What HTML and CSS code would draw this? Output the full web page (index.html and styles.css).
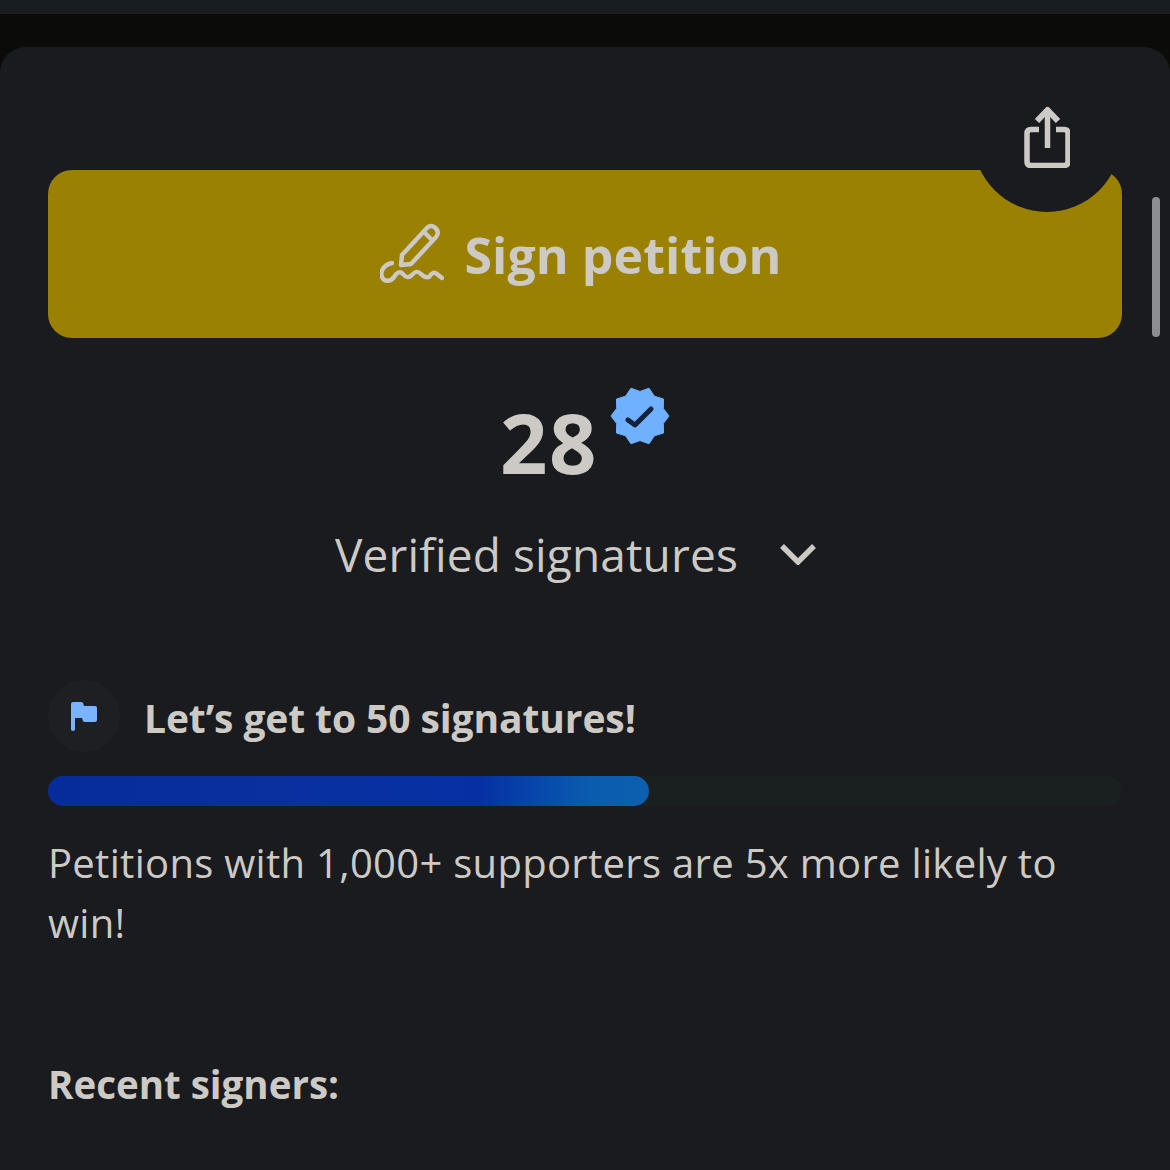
FILE: index.html
```html
<!DOCTYPE html>
<html lang="en">
<head>
    <meta charset="UTF-8">
    <title>Sign petition</title>
    <link rel="stylesheet" href="styles.css">
</head>
<body>
    <div class="top-strip"></div>
    <div class="sheet">
        <div class="sign-wrap">
            <button class="sign-btn">
                <svg class="pen-icon" viewBox="0 0 64 64" fill="none" stroke="currentColor" stroke-width="4.400" stroke-linecap="round" stroke-linejoin="round">
                    <path d="M21 43 L22 33 L46 7 Q50 2 55 5.500 Q60 10 56 15 L31 42 Z"/>
                    <path d="M44 10 L52 18"/>
                    <path d="M12 41 C3 43 0 50 2 55 C4 60 11 60 14 55 C17 50 20 49 23 52 C26 56 29 56 32 53 C35 49 38 49 41 52 C44 55 46 56 49 55 C52 50 55 50 57 52 L62 56"/>
                </svg>
                <span>Sign petition</span>
            </button>
            <div class="share-notch">
                <svg class="share-icon" viewBox="0 0 46 62" fill="none" stroke="currentColor" stroke-width="5.500" stroke-linejoin="round">
                    <path d="M15 23.500 H7 Q3 23.500 3 27.500 V55.500 Q3 59.500 7 59.500 H40 Q44 59.500 44 55.500 V27.500 Q44 23.500 40 23.500 H32"/>
                    <path d="M23.500 42 V3"/>
                    <path d="M13 15 L23.500 4 L34 15" stroke-width="6"/>
                </svg>
            </div>
        </div>

        <div class="count-row">
            <span class="count">28</span>
            <svg class="badge" viewBox="-30 -30 60 60">
                <polygon fill="#6fb1ff" stroke="#6fb1ff" stroke-width="1" stroke-linejoin="round" points="29,0 23.300,7.600 23.500,17 14.400,19.800 9,27.800 0,24.500 -9,27.800 -14.400,19.800 -23.500,17 -23.300,7.600 -29,0 -23.300,-7.600 -23.500,-17 -14.400,-19.800 -9,-27.800 0,-24.500 9,-27.800 14.400,-19.800 23.500,-17 23.300,-7.600"/>
                <path d="M-12 4 L-5 9 L11 -7" fill="none" stroke="#14233b" stroke-width="5" stroke-linecap="round" stroke-linejoin="round"/>
            </svg>
        </div>

        <div class="verified-row">
            <span>Verified signatures</span>
            <svg class="chevron" viewBox="0 0 36 22" fill="none" stroke="currentColor" stroke-width="5.500">
                <path d="M2 3 L18 19 L34 3"/>
            </svg>
        </div>

        <div class="goal-row">
            <div class="flag-circle">
                <svg class="flag" viewBox="0 0 28 30">
                    <path d="M1 3 Q1 1 3 1 H11 Q12.500 1 13 2 L14 5 H25 Q27 5 27 7 V19 Q27 21 25 21 H15 Q13.500 21 13 20 L12 17 H5 V28 Q5 30 3 30 Q1 30 1 28 Z" fill="#78b4ff"/>
                </svg>
            </div>
            <div class="goal-text">Let’s get to 50 signatures!</div>
        </div>

        <div class="progress-track">
            <div class="progress-fill" style="width: 56%"></div>
        </div>

        <p class="blurb">Petitions with 1,000+ supporters are 5x more likely to win!</p>

        <h3 class="recent">Recent signers:</h3>
    </div>
    <div class="scroll-thumb"></div>
</body>
</html>
```

FILE: styles.css
```css
html, body {
    height: 100%;
}

body {
    margin: 0;
    padding: 0;
    overflow: hidden;
    position: relative;
    font-family: "Open Sans", "Noto Sans", sans-serif;
    background-color: #0b0b09;
    color: #cdcac5;
}

.top-strip {
    height: 14px;
    background-color: #1a1d20;
}

.sheet {
    margin-top: 33px;
    padding: 123px 48px 0;
    height: 1123px;
    box-sizing: border-box;
    border-radius: 26px 26px 0 0;
    background-color: #191b1e;
}

.sign-wrap {
    position: relative;
}

.sign-btn {
    display: flex;
    align-items: center;
    justify-content: center;
    gap: 20px;
    width: 100%;
    height: 168px;
    padding: 2px 8px 0 0;
    border: none;
    border-radius: 24px;
    font-family: inherit;
    font-size: 50px;
    font-weight: 700;
    letter-spacing: 0.1px;
    color: #cdcac5;
    background-color: #9a8003;
}

.pen-icon {
    width: 64px;
    height: 64px;
    margin-bottom: 2px;
}

.share-notch {
    position: absolute;
    top: -106px;
    right: 1px;
    width: 148px;
    height: 148px;
    display: flex;
    align-items: center;
    justify-content: center;
    border-radius: 50%;
    background-color: #191b1e;
}

.share-icon {
    width: 46px;
    height: 62px;
    margin-top: -2px;
}

.count-row {
    display: flex;
    justify-content: center;
    align-items: flex-start;
    gap: 12px;
    margin-top: 48px;
}

.count {
    font-size: 83px;
    font-weight: 700;
    letter-spacing: 1.5px;
    line-height: 112px;
}

.badge {
    width: 60px;
    height: 60px;
}

.verified-row {
    display: flex;
    justify-content: center;
    align-items: center;
    gap: 42px;
    margin-top: 26px;
    padding-right: 19px;
    font-size: 46px;
    letter-spacing: 0.15px;
    line-height: 60px;
}

.chevron {
    width: 36px;
    height: 22px;
}

.goal-row {
    display: flex;
    align-items: center;
    gap: 24px;
    margin-top: 96px;
}

.flag-circle {
    display: flex;
    align-items: center;
    justify-content: center;
    width: 72px;
    height: 72px;
    border-radius: 50%;
    background-color: #1d1f22;
}

.flag {
    width: 28px;
    height: 30px;
}

.goal-text {
    padding-top: 4px;
    font-size: 39px;
    font-weight: 700;
    letter-spacing: -0.1px;
    line-height: 68px;
}

.progress-track {
    height: 30px;
    margin-top: 24px;
    border-radius: 15px;
    background-color: #1a1f20;
}

.progress-fill {
    height: 100%;
    border-radius: 15px;
    background: linear-gradient(90deg, #062c9c 0%, #0a30a0 40%, #0530a4 72%, #0a5cb0 90%, #0b60ae 100%);
}

.blurb {
    margin: 27px 0 0;
    font-size: 40px;
    letter-spacing: 0.3px;
    line-height: 60px;
}

.recent {
    margin: 104px 0 0;
    font-size: 38.500px;
    font-weight: 700;
    line-height: 54px;
}

.scroll-thumb {
    position: absolute;
    top: 197px;
    right: 10px;
    width: 8px;
    height: 140px;
    border-radius: 4px;
    background-color: #8d8e91;
}
```
